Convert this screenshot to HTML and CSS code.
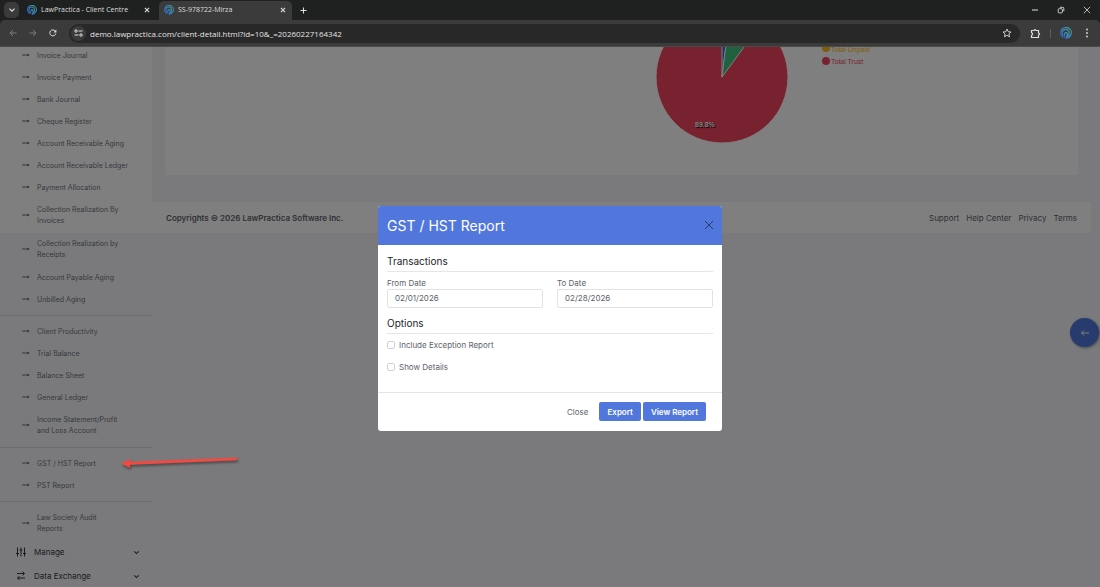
FILE: index.html
```
<!DOCTYPE html>
<html lang="en">
<head>
    <meta charset="utf-8">
    <title>SS-978722-Mirza</title>
    <link rel="stylesheet" href="styles.css">
</head>
<body>
<!-- Shared icons -->
<svg class="defs" width="0" height="0">
    <defs>
        <linearGradient id="logoFill" x1="0" y1="1" x2="1" y2="0">
            <stop offset="0" stop-color="#2f62c9"/>
            <stop offset="0.5" stop-color="#3a85c4"/>
            <stop offset="1" stop-color="#3fa08f"/>
        </linearGradient>
        <symbol id="logo" viewBox="0 0 24 24">
            <g fill="none" stroke="url(#logoFill)" stroke-linecap="round">
                <path d="M6 20A10.500 10.500 0 1 1 21.500 16C20 19.500 17 22 12.500 22.300" stroke-width="2.500"/>
                <path d="M6 16.500A7 7 0 1 1 18.300 13C18.300 16 17 18 15 19.500" stroke-width="2.500"/>
                <path d="M9 20V13.500A3 3 0 0 1 14.500 12.500C15 15 14.500 19 12.500 22" stroke-width="2.500"/>
            </g>
        </symbol>
        <symbol id="arrow" viewBox="0 0 8 6">
            <path d="M0 3H6.500" fill="none" stroke="currentColor" stroke-width="1"/>
            <path d="M5.200 1.400L7.800 3L5.200 4.600Z" fill="currentColor"/>
        </symbol>
        <symbol id="cross" viewBox="0 0 10 10">
            <path d="M1 1L9 9M9 1L1 9" fill="none" stroke="currentColor"/>
        </symbol>
        <symbol id="bold-cross" viewBox="0 0 10 10">
            <path d="M1.500 1.500L8.500 8.500M8.500 1.500L1.500 8.500" fill="none" stroke="currentColor" stroke-width="1.800"/>
        </symbol>
        <symbol id="chevron" viewBox="0 0 8 8">
            <path d="M1.500 2.700L4 5.200L6.500 2.700" fill="none" stroke="currentColor" stroke-width="1.200"/>
        </symbol>
    </defs>
</svg>

<header class="browser">
    <div class="tab-strip">
        <button class="tab-search" aria-label="Search tabs"><svg width="8" height="8"><use href="#chevron"/></svg></button>
        <div class="tab">
            <svg width="10" height="10"><use href="#logo"/></svg>
            <span>LawPractica - Client Centre</span>
            <button aria-label="Close tab"><svg width="6" height="6"><use href="#bold-cross"/></svg></button>
        </div>
        <div class="tab active">
            <svg width="10" height="10"><use href="#logo"/></svg>
            <span>SS-978722-Mirza</span>
            <button aria-label="Close tab"><svg width="6" height="6"><use href="#bold-cross"/></svg></button>
        </div>
        <button class="new-tab" aria-label="New tab"><svg width="7" height="7" viewBox="0 0 7 7"><path d="M3.500 0.500V6.500M0.500 3.500H6.500" stroke="currentColor"/></svg></button>
        <div class="window-buttons">
            <button aria-label="Minimize"><svg width="8" height="8" viewBox="0 0 8 8"><path d="M1 4H7" stroke="currentColor"/></svg></button>
            <button aria-label="Restore"><svg width="8" height="8" viewBox="0 0 8 8" fill="none" stroke="currentColor" stroke-width="0.900"><rect x="1.200" y="2.700" width="4.200" height="4.200" rx="1"/><path d="M2.800 1.300H5.800Q6.800 1.300 6.800 2.300V5.300"/></svg></button>
            <button aria-label="Close window"><svg width="8" height="8"><use href="#cross"/></svg></button>
        </div>
    </div>
    <div class="toolbar">
        <button class="muted" aria-label="Back"><svg width="8" height="8" viewBox="0 0 8 8"><path d="M7.500 4H1M4 1L1 4L4 7" fill="none" stroke="currentColor"/></svg></button>
        <button class="muted" aria-label="Forward"><svg width="8" height="8" viewBox="0 0 8 8"><path d="M0.500 4H7M4 1L7 4L4 7" fill="none" stroke="currentColor"/></svg></button>
        <button aria-label="Reload"><svg width="8" height="8" viewBox="0 0 8 8"><path d="M6.800 4.500A3 3 0 1 1 6.200 2" fill="none" stroke="currentColor"/><path d="M7.400 0.500V3.500H4.400Z" fill="currentColor"/></svg></button>
        <div class="address">
            <button class="site-info" aria-label="Site information"><svg width="9" height="8" viewBox="0 0 9 8" fill="none" stroke="currentColor"><circle cx="2" cy="2" r="1.200"/><path d="M4.500 2H8.500M0.500 6H4.500"/><circle cx="7" cy="6" r="1.200"/></svg></button>
            <input type="text" aria-label="Address" value="demo.lawpractica.com/client-detail.html?id=10&amp;_=20260227164342">
            <button aria-label="Bookmark"><svg width="10" height="10" viewBox="0 0 10 10"><path d="M5 1L6.200 3.700L9 4L6.900 5.900L7.500 8.800L5 7.300L2.500 8.800L3.100 5.900L1 4L3.800 3.700Z" fill="none" stroke="currentColor" stroke-width="0.900"/></svg></button>
        </div>
        <div class="tools">
            <button aria-label="Extensions"><svg width="11" height="11" viewBox="0 0 11 11"><path d="M1.500 2.500H4Q5 0.500 6 2.500H8.500V5Q10.800 6 8.500 7V9.500H1.500V7.500Q3.600 6 1.500 4.500Z" fill="none" stroke="currentColor" stroke-width="1.200"/></svg></button>
            <span class="separator"></span>
            <button aria-label="Profile"><svg width="12" height="12"><use href="#logo"/></svg></button>
            <button class="menu" aria-label="Menu"><svg width="4" height="10" viewBox="0 0 4 10" fill="currentColor"><circle cx="2" cy="1.500" r="0.900"/><circle cx="2" cy="5" r="0.900"/><circle cx="2" cy="8.500" r="0.900"/></svg></button>
        </div>
    </div>
</header>

<div class="viewport">
    <div class="page">
        <nav class="sidebar">
            <ul>
                <li><a href="#"><svg><use href="#arrow"/></svg>Invoice Journal</a></li>
                <li><a href="#"><svg><use href="#arrow"/></svg>Invoice Payment</a></li>
                <li><a href="#"><svg><use href="#arrow"/></svg>Bank Journal</a></li>
                <li><a href="#"><svg><use href="#arrow"/></svg>Cheque Register</a></li>
                <li><a href="#"><svg><use href="#arrow"/></svg>Account Receivable Aging</a></li>
                <li><a href="#"><svg><use href="#arrow"/></svg>Account Receivable Ledger</a></li>
                <li><a href="#"><svg><use href="#arrow"/></svg>Payment Allocation</a></li>
                <li><a href="#" class="long"><svg><use href="#arrow"/></svg>Collection Realization By<br>Invoices</a></li>
                <li><a href="#" class="long"><svg><use href="#arrow"/></svg>Collection Realization by<br>Receipts</a></li>
                <li><a href="#"><svg><use href="#arrow"/></svg>Account Payable Aging</a></li>
                <li><a href="#"><svg><use href="#arrow"/></svg>Unbilled Aging</a></li>
            </ul>
            <ul>
                <li><a href="#"><svg><use href="#arrow"/></svg>Client Productivity</a></li>
                <li><a href="#"><svg><use href="#arrow"/></svg>Trial Balance</a></li>
                <li><a href="#"><svg><use href="#arrow"/></svg>Balance Sheet</a></li>
                <li><a href="#"><svg><use href="#arrow"/></svg>General Ledger</a></li>
                <li><a href="#" class="long"><svg><use href="#arrow"/></svg>Income Statement/Profit<br>and Loss Account</a></li>
            </ul>
            <ul>
                <li><a href="#"><svg><use href="#arrow"/></svg>GST / HST Report</a></li>
                <li><a href="#"><svg><use href="#arrow"/></svg>PST Report</a></li>
            </ul>
            <ul>
                <li><a href="#" class="long"><svg><use href="#arrow"/></svg>Law Society Audit<br>Reports</a></li>
            </ul>
            <a href="#" class="section">
                <svg width="10" height="10" viewBox="0 0 10 10" fill="none" stroke="currentColor"><path d="M1.500 0.500V9.500M5 0.500V9.500M8.500 0.500V9.500M0 6.500H3M3.500 3H6.500M7 6.500H10"/></svg>
                <span>Manage</span>
                <svg width="7" height="7"><use href="#chevron"/></svg>
            </a>
            <a href="#" class="section">
                <svg width="10" height="10" viewBox="0 0 10 10" fill="none" stroke="currentColor"><path d="M1 2.500H8.500M6.500 0.500L8.500 2.500L6.500 4.500M9 7H1.500M3.500 5L1.500 7L3.500 9"/></svg>
                <span>Data Exchange</span>
                <svg width="7" height="7"><use href="#chevron"/></svg>
            </a>
        </nav>

        <main class="content">
            <section class="chart-card">
                <svg class="chart" width="220" height="96" viewBox="0 0 220 96">
                    <g stroke="#fff" stroke-width="1">
                        <circle cx="66" cy="30" r="66" fill="#f1435f"/>
                        <path d="M66 30V-36A66 66 0 0 1 74 -35.500Z" fill="#2a69d8"/>
                        <path d="M66 30L74 -35.500A66 66 0 0 1 105 -23Z" fill="#41c280"/>
                    </g>
                    <text x="39" y="80" class="percent">89.8%</text>
                    <circle cx="170" cy="1" r="4" fill="#fdb813"/>
                    <text x="175" y="5" fill="#fdb813">Total Unpaid</text>
                    <circle cx="170" cy="14" r="4" fill="#f1435f"/>
                    <text x="175" y="17" fill="#f1435f">Total Trust</text>
                </svg>
            </section>
            <footer class="footer">
                <strong>Copyrights © 2026 LawPractica Software Inc.</strong>
                <div>
                    <a href="#">Support</a>
                    <a href="#">Help Center</a>
                    <a href="#">Privacy</a>
                    <a href="#">Terms</a>
                </div>
            </footer>
        </main>
        <button class="drawer-toggle" aria-label="Open panel"><svg width="10" height="8" viewBox="0 0 10 8"><path d="M9 4H1.500M4 1.500L1.500 4L4 6.500" fill="none" stroke="currentColor"/></svg></button>
    </div>

    <div class="backdrop">
        <form class="modal" role="dialog" aria-labelledby="modalTitle">
            <div class="modal-header">
                <h2 id="modalTitle">GST / HST Report</h2>
                <button type="button" aria-label="Close dialog"><svg width="10" height="10"><use href="#cross"/></svg></button>
            </div>
            <div class="modal-body">
                <h3>Transactions</h3>
                <div class="dates">
                    <div>
                        <label for="fromDate">From Date</label>
                        <input type="text" id="fromDate" value="02/01/2026">
                    </div>
                    <div>
                        <label for="toDate">To Date</label>
                        <input type="text" id="toDate" value="02/28/2026">
                    </div>
                </div>
                <h3>Options</h3>
                <div class="check">
                    <input type="checkbox" id="exception">
                    <label for="exception">Include Exception Report</label>
                </div>
                <div class="check">
                    <input type="checkbox" id="details">
                    <label for="details">Show Details</label>
                </div>
            </div>
            <div class="modal-footer">
                <button type="button" class="plain">Close</button>
                <button type="button" class="primary">Export</button>
                <button type="submit" class="primary">View Report</button>
            </div>
        </form>
    </div>

    <!-- Pointer to the GST / HST entry -->
    <svg class="pointer" width="124" height="20" viewBox="0 0 124 20">
        <path d="M1 11.500L10 7V9.800L117 5.500V8.300L10 12.800V16Z" fill="#f04a42"/>
    </svg>
</div>
</body>
</html>
```

FILE: styles.css
```
* {
    box-sizing: border-box;
}

body {
    margin: 0;
    height: 100vh;
    display: flex;
    flex-direction: column;
    overflow: hidden;
    font-family: Inter, "Liberation Sans", sans-serif;
    font-size: 8px;
    color: #5c636a;
    background-color: #f4f5f9;
}

a {
    color: inherit;
    text-decoration: none;
}

button {
    display: flex;
    align-items: center;
    justify-content: center;
    padding: 0;
    border: none;
    background: none;
    color: inherit;
    font: inherit;
    cursor: pointer;
}

ul {
    list-style: none;
    margin: 0;
    padding: 0;
}

.defs {
    position: absolute;
}

/* Browser bar */
.browser {
    flex: none;
    font-family: "Open Sans", "Noto Sans", sans-serif;
    font-size: 7px;
    color: #dedede;
    background-color: #1f2120;
}

.tab-strip {
    display: flex;
    align-items: center;
    height: 20px;
    padding-left: 4px;
}

.tab-search {
    width: 15px;
    height: 16px;
    margin-right: 3px;
    border-radius: 5px;
    background-color: #3b3b3b;
}

.tab {
    display: flex;
    align-items: center;
    width: 137px;
    height: 19px;
    padding: 0 9px 1px 5px;
    gap: 4px;
}

.tab.active {
    width: 133px;
    align-self: flex-end;
    padding-right: 6px;
    padding-bottom: 2px;
    border-radius: 5px 5px 0 0;
    background-color: #3b3b3b;
}

.tab span {
    flex: 1;
}

.new-tab {
    margin-left: 8px;
}

.window-buttons {
    display: flex;
    gap: 18px;
    margin-left: auto;
    padding-right: 9px;
}

.toolbar {
    display: flex;
    align-items: center;
    gap: 12px;
    height: 27px;
    padding: 0 11px 0 9px;
    border-radius: 5px 5px 0 0;
    border-bottom: 1px solid #4a4a4a;
    background-color: #3b3b3b;
}

.muted {
    color: #7c7c7c;
}

.address {
    display: flex;
    align-items: center;
    flex: 1;
    height: 19px;
    padding: 0 8px 0 2px;
    border-radius: 10px;
    background-color: #282828;
}

.site-info {
    width: 15px;
    height: 15px;
    margin-right: 4px;
    border-radius: 50%;
    background-color: #3b3b3b;
}

.address input {
    flex: 1;
    padding: 0;
    border: none;
    background: none;
    color: #e3e3e3;
    font: inherit;
    font-size: 8px;
}

.tools {
    display: flex;
    align-items: center;
    gap: 9px;
    margin-left: -2px;
}

.menu {
    margin-left: 4px;
}

.separator {
    width: 1px;
    height: 9px;
    background-color: #5c5c5c;
}

/* Page under the dialog */
.viewport {
    position: relative;
    flex: 1;
    overflow: hidden;
}

.page {
    display: flex;
    align-items: flex-start;
}

.sidebar {
    width: 152px;
    margin-top: -3px;
    font-size: 7px;
    color: #6c757d;
    background: linear-gradient(#fff 189px, transparent 189px);
}

.sidebar li a {
    display: flex;
    align-items: center;
    min-height: 22px;
    padding-left: 22px;
    line-height: 11px;
}

.sidebar li a.long {
    padding-top: 6px;
    padding-bottom: 6px;
}

.sidebar li svg {
    flex: none;
    width: 8px;
    height: 6px;
    margin-right: 7px;
}

.sidebar ul + ul {
    margin-top: 5px;
    padding-top: 4px;
    border-top: 1px solid #d6d8dd;
}

.section {
    display: flex;
    align-items: center;
    height: 24px;
    padding: 0 12px 0 16px;
    gap: 8px;
    font-size: 8px;
    color: #343a40;
}

.section span {
    flex: 1;
}

.content {
    flex: 1;
}

.chart-card {
    margin: 0 22px 27px 13px;
    padding: 0 0 32px 491px;
    border-radius: 0 0 2px 2px;
    background-color: #fff;
}

.chart {
    display: block;
    overflow: visible;
    font-family: "Liberation Sans", sans-serif;
    font-size: 7px;
}

.percent {
    fill: #fff;
    font-weight: bold;
    text-shadow: 1px 1px 1px #000;
}

.footer {
    display: flex;
    align-items: center;
    justify-content: space-between;
    height: 31px;
    margin-right: 9px;
    padding: 0 14px;
    background-color: #fff;
}

.footer strong {
    font-weight: 600;
}

.footer div {
    display: flex;
    gap: 7px;
}

.drawer-toggle {
    position: absolute;
    top: 271px;
    right: 1px;
    width: 29px;
    height: 29px;
    border-radius: 50%;
    background-color: #5177dd;
    color: #fff;
    box-shadow: 1px 1px 3px rgba(0, 0, 0, 0.4);
}

/* Dialog */
.backdrop {
    position: absolute;
    inset: 0;
    display: flex;
    align-items: center;
    justify-content: center;
    padding-top: 2px;
    background-color: rgba(0, 0, 0, 0.5);
}

.modal {
    width: 344px;
    border-radius: 3px;
    background-color: #fff;
    overflow: hidden;
}

.modal-header {
    display: flex;
    align-items: center;
    justify-content: space-between;
    height: 39px;
    padding: 0 8px 0 9px;
    background-color: #5177dd;
    color: #2a3b68;
}

.modal h2 {
    margin: 0;
    font-size: 14px;
    font-weight: 400;
    color: #fff;
}

.modal-body {
    padding: 9px 9px 8px;
}

.modal h3 {
    margin: 0 0 6px;
    padding-bottom: 3px;
    border-bottom: 1px solid #e4e6ea;
    font-size: 10px;
    font-weight: 400;
    line-height: 14px;
    color: #212529;
}

.dates {
    display: grid;
    grid-template-columns: 1fr 1fr;
    gap: 14px;
    margin-bottom: 8px;
}

.dates label {
    display: block;
    line-height: 11px;
}

.dates input {
    display: block;
    width: 100%;
    height: 19px;
    padding: 0 7px;
    border: 1px solid #dfe2e8;
    border-radius: 2px;
    color: inherit;
    font: inherit;
}

.check {
    display: flex;
    align-items: center;
    gap: 4px;
    height: 11px;
    margin-bottom: 11px;
}

.check input {
    appearance: none;
    width: 8px;
    height: 8px;
    margin: 0;
    border: 1px solid #ced1d6;
    border-radius: 2px;
}

.modal-footer {
    display: flex;
    align-items: center;
    justify-content: flex-end;
    gap: 2px;
    height: 39px;
    padding: 0 16px;
    border-top: 1px solid #e4e6ea;
}

.modal-footer button {
    height: 19px;
    padding: 0 8px;
    border-radius: 2px;
}

.modal-footer .plain {
    margin-right: 1px;
}

.modal-footer .primary {
    background-color: #5177dd;
    color: #fff;
    font-weight: 600;
}

.pointer {
    position: absolute;
    left: 120px;
    top: 405px;
    filter: drop-shadow(1px 2px 1px rgba(0, 0, 0, 0.4));
}
```
